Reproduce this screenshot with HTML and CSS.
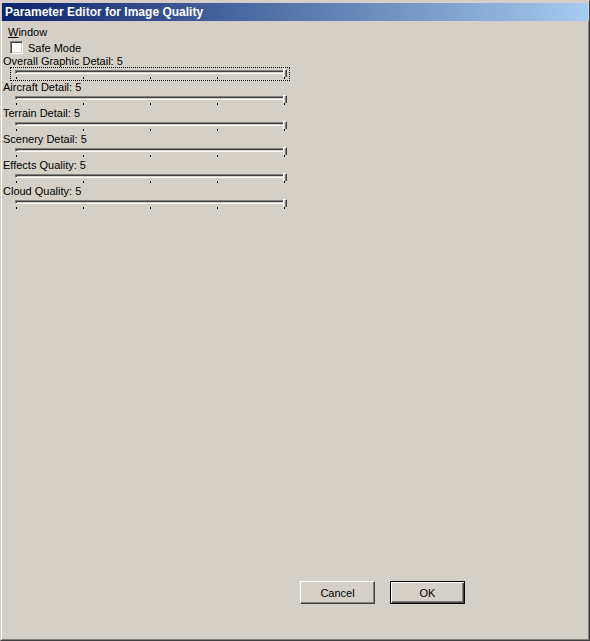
FILE: index.html
```html
<!DOCTYPE html>
<html>
<head>
<meta charset="utf-8">
<link rel="stylesheet" href="styles.css">
</head>
<body>
<div class="window">
  <div class="titlebar">Parameter Editor for Image Quality</div>
  <div class="content">
    <div class="group-label"><u>W</u>indow</div>
    <label class="check-row"><span class="checkbox"></span><span>Safe Mode</span></label>

    <div class="param">
      <div class="param-label">Overall Graphic Detail: 5</div>
      <div class="slider focused">
        <div class="track"><span class="thumb"></span></div>
        <div class="ticks"><i></i><i></i><i></i><i></i><i></i></div>
      </div>
    </div>
    <div class="param">
      <div class="param-label">Aircraft Detail: 5</div>
      <div class="slider">
        <div class="track"><span class="thumb"></span></div>
        <div class="ticks"><i></i><i></i><i></i><i></i><i></i></div>
      </div>
    </div>
    <div class="param">
      <div class="param-label">Terrain Detail: 5</div>
      <div class="slider">
        <div class="track"><span class="thumb"></span></div>
        <div class="ticks"><i></i><i></i><i></i><i></i><i></i></div>
      </div>
    </div>
    <div class="param">
      <div class="param-label">Scenery Detail: 5</div>
      <div class="slider">
        <div class="track"><span class="thumb"></span></div>
        <div class="ticks"><i></i><i></i><i></i><i></i><i></i></div>
      </div>
    </div>
    <div class="param">
      <div class="param-label">Effects Quality: 5</div>
      <div class="slider">
        <div class="track"><span class="thumb"></span></div>
        <div class="ticks"><i></i><i></i><i></i><i></i><i></i></div>
      </div>
    </div>
    <div class="param">
      <div class="param-label">Cloud Quality: 5</div>
      <div class="slider">
        <div class="track"><span class="thumb"></span></div>
        <div class="ticks"><i></i><i></i><i></i><i></i><i></i></div>
      </div>
    </div>

    <div class="buttons">
      <button class="btn">Cancel</button>
      <button class="btn default">OK</button>
    </div>
  </div>
</div>
</body>
</html>
```

FILE: styles.css
```css
html, body {
  margin: 0;
  padding: 0;
  background: #d4d0c8;
}
body {
  font-family: "Liberation Sans", Arial, sans-serif;
  font-size: 11px;
  color: #000;
}
.window {
  box-sizing: border-box;
  width: 590px;
  height: 641px;
  background: #d4d0c8;
  border-top: 1px solid #d4d0c8;
  border-left: 1px solid #d4d0c8;
  border-right: 1px solid #404040;
  border-bottom: 1px solid #404040;
  display: flex;
  flex-direction: column;
}
.titlebar {
  margin: 2px 1px 0 1px;
  height: 18px;
  line-height: 18px;
  padding-left: 3px;
  background: linear-gradient(to right, #0a246a, #a6caf0);
  color: #fff;
  font-weight: bold;
  font-size: 12px;
  white-space: nowrap;
  box-shadow: -1px -1px 0 1px #d4d0c8;
}
.content {
  flex: 1;
  display: flex;
  flex-direction: column;
  padding: 5px 0 0 1px;
  border-left: 1px solid #fff;
  border-right: 1px solid #808080;
  border-bottom: 1px solid #808080;
}
.group-label {
  height: 13px;
  line-height: 13px;
  padding-left: 5px;
}
.check-row {
  display: flex;
  align-items: center;
  gap: 5px;
  height: 15px;
  margin-top: 1px;
  padding-left: 7px;
}
.checkbox {
  box-sizing: border-box;
  width: 13px;
  height: 13px;
  background: #fff;
  border-top: 1px solid #808080;
  border-left: 1px solid #808080;
  border-right: 1px solid #fff;
  border-bottom: 1px solid #fff;
  box-shadow: inset 1px 1px 0 #404040, inset -1px -1px 0 #d4d0c8;
}
.param {
  display: flex;
  flex-direction: column;
}
.param-label {
  height: 12px;
  line-height: 12px;
  white-space: nowrap;
}
.slider {
  box-sizing: border-box;
  position: relative;
  width: 280px;
  height: 14px;
  margin-left: 7px;
  padding: 2px 3px 0 4px;
  border: 1px dotted transparent;
}
.slider.focused {
  border-color: #000;
}
.track {
  position: relative;
  height: 4px;
  border-top: 1px solid #808080;
  border-left: 1px solid #808080;
  border-bottom: 1px solid #fff;
  border-right: 1px solid #fff;
  box-sizing: border-box;
  box-shadow: inset 1px 1px 0 #404040;
  background: #d4d0c8;
}
.thumb {
  position: absolute;
  right: -2px;
  top: -2px;
  width: 4px;
  height: 8px;
  box-sizing: border-box;
  background: #d4d0c8;
  border-left: 1px solid #fff;
  border-top: 1px solid #fff;
  border-right: 1px solid #404040;
  box-shadow: inset -1px 0 0 #808080;
}
.ticks {
  display: flex;
  justify-content: space-between;
  margin-top: 3px;
  padding: 0 1px 0 1px;
}
.ticks i {
  display: block;
  width: 1px;
  height: 2px;
  background: #000;
}
.buttons {
  margin-top: auto;
  display: flex;
  justify-content: flex-end;
  gap: 15px;
  padding: 0 123px 35px 0;
}
.btn {
  box-sizing: border-box;
  width: 75px;
  height: 23px;
  padding: 0;
  font-family: "Liberation Sans", Arial, sans-serif;
  font-size: 11px;
  color: #000;
  background: #d4d0c8;
  border-top: 1px solid #fff;
  border-left: 1px solid #fff;
  border-right: 1px solid #404040;
  border-bottom: 1px solid #404040;
  box-shadow: inset -1px -1px 0 #808080;
}
.btn.default {
  border: 1px solid #000;
  box-shadow: inset 1px 1px 0 #fff, inset -1px -1px 0 #404040, inset -2px -2px 0 #808080;
}
```
